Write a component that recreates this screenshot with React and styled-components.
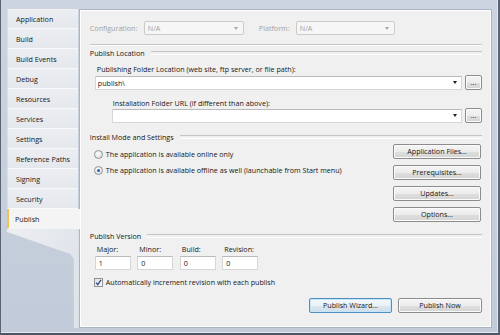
import React from "react";
import styled, { createGlobalStyle } from "styled-components";

const GlobalStyle = createGlobalStyle`
  html, body { margin: 0; padding: 0; background: #c6cfdc; }
  body {
    font-family: "Open Sans", "Noto Sans", sans-serif;
    font-size: 7.15px;
    color: #161616;
  }
  * { box-sizing: border-box; }
`;

const Frame = styled.div`
  width: 500px;
  height: 335px;
  display: flex;
  padding: 9px 6px 5px 6px;
  background: linear-gradient(#ccd4df, #c2cbd9);
  border-left: 1px solid #5b6472;
  border-right: 2px solid #5b6472;
  border-bottom: 2px solid #4e5663;
  box-shadow: inset -1px -1px 0 #e4e9f0;
`;

const Sidebar = styled.div`
  width: 72px;
  display: flex;
  flex-direction: column;
`;

const Tab = styled.div`
  height: 20px;
  display: flex;
  align-items: center;
  padding-left: ${(p) => (p.$active ? 6 : 8)}px;
  color: #161616;
  background: ${(p) =>
    p.$active ? "#f4f4f4" : "linear-gradient(#eceef2, #e4e7ec)"};
  border-bottom: 1px solid ${(p) => (p.$active ? "#f4f4f4" : "#f8f9fb")};
  border-left: ${(p) => (p.$active ? "2px solid #f0c24e" : "1px solid #d9dee6")};
  margin-right: ${(p) => (p.$active ? "-1px" : "1px")};
  position: relative;
  z-index: ${(p) => (p.$active ? 1 : 0)};
`;

const Tail = styled.div`
  flex: 1;
  background: linear-gradient(100deg, #eceef2, #dfe3e9);
  clip-path: polygon(0 0, 100% 0, 100% 100%, 93% 100%, 93% 30px, 88% 25px, 0 3px);
`;

const Panel = styled.div`
  width: 414px;
  background: #f0f0f0;
  border: 1px solid #aab4c3;
  box-shadow: inset 0 0 0 1px #ffffff;
  padding: 11px 9px 0 10px;
  display: flex;
  flex-direction: column;
`;

const ConfigRow = styled.div`
  height: 14px;
  display: flex;
  align-items: center;
`;

const DimLabel = styled.span`
  width: ${(p) => p.$w}px;
  margin-left: ${(p) => p.$ml || 0}px;
  color: #a2a2a2;
`;

const Select = styled.div`
  width: ${(p) => p.$w}px;
  height: 14px;
  border: 1px solid #cbcbcb;
  border-radius: 2px;
  background: #f6f6f6;
  color: #a2a2a2;
  display: flex;
  align-items: center;
  justify-content: space-between;
  padding: 0 5px 0 3px;
`;

const Arrow = styled.span`
  width: 0;
  height: 0;
  border-left: 2px solid transparent;
  border-right: 2px solid transparent;
  border-top: 3px solid ${(p) => (p.$dim ? "#a8a8a8" : "#1e1e1e")};
`;

const Rule = styled.div`
  margin-top: 9px;
  height: 2px;
  border-top: 1px solid #c4c4c4;
  border-bottom: 1px solid #ffffff;
`;

const GroupHeader = styled.div`
  height: 10px;
  margin-top: ${(p) => p.$mt}px;
  display: flex;
  align-items: center;
  white-space: nowrap;
  &::after {
    content: "";
    flex: 1;
    height: 2px;
    margin-left: 6px;
    border-top: 1px solid #c4c4c4;
    border-bottom: 1px solid #ffffff;
  }
`;

const FieldLabel = styled.div`
  height: 10px;
  line-height: 10px;
  margin-top: ${(p) => p.$mt}px;
  padding-left: ${(p) => p.$indent}px;
  white-space: nowrap;
`;

const PathRow = styled.div`
  height: 15px;
  margin-top: ${(p) => p.$mt}px;
  padding-left: ${(p) => p.$indent}px;
  display: flex;
  align-items: center;
  gap: 3px;
`;

const PathInput = styled.div`
  flex: 1;
  height: 14px;
  background: #ffffff;
  border: 1px solid #d6d6d6;
  border-top-color: #b9b9b9;
  display: flex;
  align-items: center;
  justify-content: space-between;
  padding: 0 4px 0 2px;
`;

const Button = styled.button`
  width: ${(p) => p.$w}px;
  height: 15px;
  padding: 0;
  font: inherit;
  color: #161616;
  border: 1px solid ${(p) => (p.$default ? "#4e8fc0" : "#8c8c8c")};
  border-radius: 2px;
  background: ${(p) =>
    p.$default
      ? "linear-gradient(#f4f9fc 0%, #eaf2f8 50%, #dde7ef 51%, #d3dde6 100%)"
      : "linear-gradient(#f5f5f5 0%, #ececec 50%, #dfdfdf 51%, #d4d4d4 100%)"};
  box-shadow: inset 0 0 0 1px ${(p) => (p.$default ? "#c5e6f8" : "#fbfbfb")};
  display: flex;
  align-items: center;
  justify-content: center;
  line-height: 1;
`;

const InstallArea = styled.div`
  margin-top: 2px;
  display: flex;
  justify-content: space-between;
`;

const RadioList = styled.div`
  padding: 5px 0 0 4px;
  display: flex;
  flex-direction: column;
  gap: 6px;
`;

const OptionRow = styled.label`
  height: 10px;
  display: flex;
  align-items: center;
  gap: 3px;
  white-space: nowrap;
`;

const Radio = styled.span`
  width: 9px;
  height: 9px;
  border-radius: 50%;
  border: 1px solid #939393;
  background: radial-gradient(circle at 40% 35%, #ffffff, #d6d6d6);
  display: flex;
  align-items: center;
  justify-content: center;
  &::after {
    content: "";
    width: 3px;
    height: 3px;
    border-radius: 50%;
    background: ${(p) => (p.$checked ? "#2a63a8" : "transparent")};
  }
`;

const Check = styled.span`
  width: 9px;
  height: 9px;
  border: 1px solid #939393;
  background: linear-gradient(135deg, #dcdcdc, #ffffff);
  display: flex;
  align-items: center;
  justify-content: center;
`;

const ButtonStack = styled.div`
  margin-right: 1px;
  display: flex;
  flex-direction: column;
  gap: 6px;
`;

const VersionGrid = styled.div`
  margin-top: 3px;
  padding-left: 5px;
  display: grid;
  grid-template-columns: repeat(4, 36px);
  column-gap: 6.5px;
`;

const VersionField = styled.div`
  display: flex;
  flex-direction: column;
  gap: 2px;
`;

const SmallLabel = styled.span`
  height: 10px;
  line-height: 10px;
  padding-left: 2px;
`;

const NumInput = styled.div`
  height: 14px;
  background: #ffffff;
  border: 1px solid #d6d6d6;
  border-top-color: #b9b9b9;
  padding-left: 3px;
  display: flex;
  align-items: center;
`;

const CheckRow = styled(OptionRow)`
  margin-top: 7px;
  padding-left: 4px;
`;

const Footer = styled.div`
  margin-top: 11px;
  display: flex;
  justify-content: flex-end;
  gap: 6px;
`;

const tabs = [
  "Application",
  "Build",
  "Build Events",
  "Debug",
  "Resources",
  "Services",
  "Settings",
  "Reference Paths",
  "Signing",
  "Security",
  "Publish",
];

function App() {
  return (
    <>
      <GlobalStyle />
      <Frame>
        <Sidebar>
          {tabs.map((t) => (
            <Tab key={t} $active={t === "Publish"}>
              {t}
            </Tab>
          ))}
          <Tail />
        </Sidebar>

        <Panel>
          <ConfigRow>
            <DimLabel $w={54}>Configuration:</DimLabel>
            <Select $w={100}>
              N/A <Arrow $dim />
            </Select>
            <DimLabel $w={37} $ml={15}>
              Platform:
            </DimLabel>
            <Select $w={99}>
              N/A <Arrow $dim />
            </Select>
          </ConfigRow>
          <Rule />

          <GroupHeader $mt={2}>Publish Location</GroupHeader>
          <FieldLabel $mt={6} $indent={7}>
            Publishing Folder Location (web site, ftp server, or file path):
          </FieldLabel>
          <PathRow $mt={1} $indent={5}>
            <PathInput>
              publish\ <Arrow />
            </PathInput>
            <Button $w={17}>...</Button>
          </PathRow>
          <FieldLabel $mt={8} $indent={23}>
            Installation Folder URL (if different than above):
          </FieldLabel>
          <PathRow $mt={0} $indent={22}>
            <PathInput>
              <span />
              <Arrow />
            </PathInput>
            <Button $w={17}>...</Button>
          </PathRow>

          <GroupHeader $mt={9}>Install Mode and Settings</GroupHeader>
          <InstallArea>
            <RadioList>
              <OptionRow>
                <Radio /> The application is available online only
              </OptionRow>
              <OptionRow>
                <Radio $checked /> The application is available offline as
                well (launchable from Start menu)
              </OptionRow>
            </RadioList>
            <ButtonStack>
              <Button $w={88}>Application Files...</Button>
              <Button $w={88}>Prerequisites...</Button>
              <Button $w={88}>Updates...</Button>
              <Button $w={88}>Options...</Button>
            </ButtonStack>
          </InstallArea>

          <GroupHeader $mt={9}>Publish Version</GroupHeader>
          <VersionGrid>
            {[
              ["Major:", "1"],
              ["Minor:", "0"],
              ["Build:", "0"],
              ["Revision:", "0"],
            ].map(([label, value]) => (
              <VersionField key={label}>
                <SmallLabel>{label}</SmallLabel>
                <NumInput>{value}</NumInput>
              </VersionField>
            ))}
          </VersionGrid>
          <CheckRow>
            <Check>
              <svg width="7" height="7" viewBox="0 0 7 7">
                <path
                  d="M1 3.6 L2.8 5.6 L6 0.8"
                  fill="none"
                  stroke="#2f4a86"
                  strokeWidth="1.3"
                />
              </svg>
            </Check>
            Automatically increment revision with each publish
          </CheckRow>

          <Footer>
            <Button $w={83} $default>
              Publish Wizard...
            </Button>
            <Button $w={84}>Publish Now</Button>
          </Footer>
        </Panel>
      </Frame>
    </>
  );
}

export default App;
